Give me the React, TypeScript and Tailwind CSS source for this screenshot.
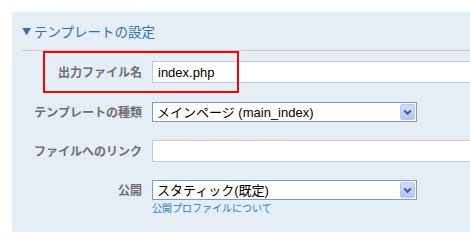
import React from "react";

const jp = { fontFamily: '"Noto Sans CJK JP", "Noto Sans", sans-serif' };
const mix = { fontFamily: '"Liberation Sans", "Noto Sans CJK JP", sans-serif' };

function Arrow() {
  return (
    <div className="absolute right-[1px] top-[1px] w-[15px] h-[16px] rounded-[2px] border border-[#b5c8f5] bg-gradient-to-b from-[#cddcfd] to-[#b4c7f7] flex items-center justify-center">
      <svg width="9" height="7" viewBox="0 0 9 7">
        <path d="M1.2 1.5 L4.5 4.8 L7.8 1.5" fill="none" stroke="#4d6185" strokeWidth="2" />
      </svg>
    </div>
  );
}

function Select({ text }: { text: string }) {
  return (
    <div className="relative w-[265px] h-[20px] border border-[#7f9db9] bg-white flex items-center pl-[4px] text-[13px] text-black leading-none" style={mix}>
      <span>{text}</span>
      <Arrow />
    </div>
  );
}

function Input({ text }: { text?: string }) {
  return (
    <div className="w-[330px] h-[22px] border border-[#c8c8c8] bg-white flex items-center pl-[5px] text-[13px] text-black leading-none" style={mix}>
      {text}
    </div>
  );
}

function Label({ children }: { children: React.ReactNode }) {
  return (
    <div className="w-[120px] shrink-0 text-right text-[12px] font-bold text-[#6e6e6e] leading-none" style={jp}>
      {children}
    </div>
  );
}

export default function App() {
  return (
    <div className="w-[470px] h-[243px] bg-white overflow-hidden relative">
      <div className="ml-[12px] mt-[12px] w-[470px] h-[220px] bg-[#e5edf5] pl-[10px]">
        <div className="h-[39px] border-b border-[#c8c8c8] flex items-center pt-[1px] text-[13.5px] text-[#2f72a3] leading-none" style={jp}>
          <span className="text-[9px] mr-[3px]">▼</span>
          <span>テンプレートの設定</span>
        </div>
        <div className="flex items-center gap-[10px] mt-[10px]">
          <Label>出力ファイル名</Label>
          <Input text="index.php" />
        </div>
        <div className="flex items-center gap-[10px] mt-[19px]">
          <Label>テンプレートの種類</Label>
          <Select text="メインページ (main_index)" />
        </div>
        <div className="flex items-center gap-[10px] mt-[18px]">
          <Label>ファイルへのリンク</Label>
          <Input />
        </div>
        <div className="flex items-start gap-[10px] mt-[18px]">
          <div className="h-[20px] flex items-center">
            <Label>公開</Label>
          </div>
          <div className="flex flex-col">
            <Select text="スタティック(既定)" />
            <span className="mt-[2px] text-[10px] leading-[12px] text-[#2d7db5]" style={jp}>
              公開プロファイルについて
            </span>
          </div>
        </div>
      </div>
      <div className="absolute left-[43px] top-[51px] w-[196px] h-[42px] border-2 border-[#ff0000]" />
    </div>
  );
}
